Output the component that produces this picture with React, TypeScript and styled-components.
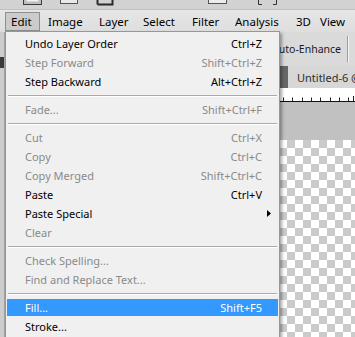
import React from "react";
import styled, { createGlobalStyle, css } from "styled-components";

const Global = createGlobalStyle`
  html, body { margin: 0; padding: 0; }
  body {
    width: 355px;
    height: 337px;
    overflow: hidden;
    background: #c1c1c1;
    font-family: "Noto Sans", "Open Sans", sans-serif;
    -webkit-font-smoothing: antialiased;
  }
`;

const Frame = styled.div`
  position: relative;
  width: 355px;
  height: 337px;
  display: flex;
  flex-direction: column;
  overflow: hidden;
`;

const TopStrip = styled.div`
  height: 10px;
  flex-shrink: 0;
  background: #d2d2d2;
  border-bottom: 1px solid #c2c2c2;
  box-sizing: border-box;
  display: flex;
`;

const MenuBar = styled.div`
  height: 22px;
  flex-shrink: 0;
  box-sizing: border-box;
  background: linear-gradient(#e6e6e6, #dedede);
  display: flex;
  align-items: center;
  padding-left: 5px;
`;

const BarItem = styled.div<{ $w: number; $active?: boolean }>`
  width: ${(p) => p.$w}px;
  height: 19px;
  box-sizing: border-box;
  padding-left: 6px;
  display: flex;
  align-items: center;
  font-size: 11.5px;
  color: #000;
  white-space: nowrap;
  ${(p) =>
    p.$active &&
    css`
      background: #cbcbcb;
      border: 1px solid #8f8f8f;
      padding-left: 5px;
      margin-right: 2px;
    `}
`;

const Workspace = styled.div`
  flex: 1;
  display: flex;
  min-height: 0;
`;

const ToolsEdge = styled.div`
  width: 5px;
  flex-shrink: 0;
  background: #cdcdcd;
  border-right: 1px solid #a4a4a4;
  box-sizing: border-box;
  display: flex;
  flex-direction: column;
`;

const ToolPatch = styled.div`
  margin-top: 25px;
  height: 11px;
  background: #3a3a3a;
`;

const MainArea = styled.div`
  flex: 1;
  display: flex;
  flex-direction: column;
  min-width: 0;
`;

const OptionsBar = styled.div`
  height: 34px;
  flex-shrink: 0;
  background: #dadada;
  display: flex;
  align-items: center;
  justify-content: flex-end;
  padding-right: 6px;
  box-sizing: border-box;
`;

const OptionLabel = styled.span`
  font-size: 10.5px;
  color: #1a1a1a;
  white-space: nowrap;
  margin-right: 6px;
`;

const OptionDivider = styled.div`
  width: 1px;
  height: 26px;
  background: #9c9c9c;
  border-right: 1px solid #f4f4f4;
`;

const TabBar = styled.div`
  height: 22px;
  flex-shrink: 0;
  background: #666666;
  display: flex;
`;

const DocTab = styled.div`
  margin-left: 283px;
  flex: 1;
  background: #d7d7d7;
  padding-left: 9px;
  display: flex;
  align-items: center;
  font-size: 11px;
  color: #2e2e2e;
  white-space: nowrap;
  overflow: hidden;
`;

const Ruler = styled.div`
  height: 14px;
  flex-shrink: 0;
  background: #ffffff;
  border-bottom: 1px solid #111;
  box-sizing: border-box;
  display: flex;
  align-items: flex-end;
`;

const GrayGap = styled.div`
  height: 38px;
  flex-shrink: 0;
  background: #c1c1c1;
`;

const Checker = styled.div`
  flex: 1;
  background-color: #ffffff;
  background-image: conic-gradient(
    #cbcbcb 0 25%,
    #ffffff 0 50%,
    #cbcbcb 0 75%,
    #ffffff 0
  );
  background-size: 16px 16px;
  background-position: 2px 0;
`;

const Dropdown = styled.div`
  position: absolute;
  left: 5px;
  top: 31px;
  width: 275px;
  height: 320px;
  box-sizing: border-box;
  background: #f0f0f0;
  border: 1px solid #979797;
  padding: 2px 0;
  box-shadow: 2px 2px 3px rgba(0, 0, 0, 0.35);
  display: flex;
  flex-direction: column;
`;

const Item = styled.div<{ $disabled?: boolean; $hot?: boolean }>`
  height: 17px;
  margin: 1px 1px;
  padding-left: 18px;
  display: grid;
  grid-template-columns: 1fr auto 16px;
  align-items: center;
  font-size: 11px;
  white-space: nowrap;
  color: ${(p) => (p.$hot ? "#ffffff" : p.$disabled ? "#8a8a8a" : "#000000")};
  background: ${(p) => (p.$hot ? "#3399ff" : "transparent")};
`;

const Shortcut = styled.span`
  text-align: right;
`;

const ArrowCell = styled.span`
  display: flex;
  align-items: center;
  padding-left: 5px;
`;

const Separator = styled.div`
  height: 9px;
  display: flex;
  align-items: center;
  padding: 0 2px;
  &::after {
    content: "";
    flex: 1;
    height: 0;
    border-top: 1px solid #a9a9a9;
    border-bottom: 1px solid #ffffff;
  }
`;

type Entry =
  | { sep: true }
  | { label: string; key?: string; disabled?: boolean; hot?: boolean; sub?: boolean };

const entries: Entry[] = [
  { label: "Undo Layer Order", key: "Ctrl+Z" },
  { label: "Step Forward", key: "Shift+Ctrl+Z", disabled: true },
  { label: "Step Backward", key: "Alt+Ctrl+Z" },
  { sep: true },
  { label: "Fade...", key: "Shift+Ctrl+F", disabled: true },
  { sep: true },
  { label: "Cut", key: "Ctrl+X", disabled: true },
  { label: "Copy", key: "Ctrl+C", disabled: true },
  { label: "Copy Merged", key: "Shift+Ctrl+C", disabled: true },
  { label: "Paste", key: "Ctrl+V" },
  { label: "Paste Special", sub: true },
  { label: "Clear", disabled: true },
  { sep: true },
  { label: "Check Spelling...", disabled: true },
  { label: "Find and Replace Text...", disabled: true },
  { sep: true },
  { label: "Fill...", key: "Shift+F5", hot: true },
  { label: "Stroke..." },
];

const barItems: { label: string; w: number; active?: boolean }[] = [
  { label: "Edit", w: 35, active: true },
  { label: "Image", w: 51 },
  { label: "Layer", w: 44 },
  { label: "Select", w: 49 },
  { label: "Filter", w: 43 },
  { label: "Analysis", w: 61 },
  { label: "3D", w: 24 },
  { label: "View", w: 40 },
];

const ToolbarIcons = () => (
  <svg width="355" height="9" viewBox="0 0 355 9">
    <rect x="23.5" y="-3.5" width="18" height="8" fill="#bdbdbd" stroke="#3c3c3c" />
    <rect x="26.5" y="-3.5" width="12" height="5" fill="#f2f2f2" stroke="none" />
    <rect x="60.5" y="-3.5" width="17" height="7" fill="#e9e9e9" stroke="#555" />
    <path d="M97.5 4.5 V-1 M97.5 4.5 H112.5 V-1" fill="none" stroke="#2a2a2a" strokeWidth="2" />
    <rect x="208.5" y="-3.5" width="18" height="7" fill="#ececec" stroke="#555" />
    <path d="M258.5 -1 V4.5 H262 M276.5 -1 V4.5 H273" fill="none" stroke="#333" />
  </svg>
);

const RulerTicks = () => {
  const ticks = [];
  for (let x = 283; x <= 350; x += 9.3) ticks.push(Math.round(x - 5) + 0.5);
  return (
    <svg width="350" height="5" viewBox="0 0 350 5">
      {ticks.map((x, i) => (
        <line key={i} x1={x} y1={1.5} x2={x} y2={5} stroke="#222" />
      ))}
      <line x1={348.5} y1={-10} x2={348.5} y2={5} stroke="#222" />
    </svg>
  );
};

const Arrow = () => (
  <svg width="4" height="7" viewBox="0 0 4 7">
    <path d="M0 0 L4 3.5 L0 7 Z" fill="#000" />
  </svg>
);

export default function App() {
  return (
    <Frame>
      <Global />
      <TopStrip>
        <ToolbarIcons />
      </TopStrip>
      <MenuBar>
        {barItems.map((b) => (
          <BarItem key={b.label} $w={b.w} $active={b.active}>
            {b.label}
          </BarItem>
        ))}
      </MenuBar>
      <Workspace>
        <ToolsEdge>
          <ToolPatch />
        </ToolsEdge>
        <MainArea>
          <OptionsBar>
            <OptionLabel>Auto-Enhance</OptionLabel>
            <OptionDivider />
          </OptionsBar>
          <TabBar>
            <DocTab>Untitled-6 @ 100% (Layer 1, RGB/8)</DocTab>
          </TabBar>
          <Ruler>
            <RulerTicks />
          </Ruler>
          <GrayGap />
          <Checker />
        </MainArea>
      </Workspace>
      <Dropdown>
        {entries.map((e, i) =>
          "sep" in e ? (
            <Separator key={i} />
          ) : (
            <Item key={i} $disabled={e.disabled} $hot={e.hot}>
              <span>{e.label}</span>
              <Shortcut>{e.key ?? ""}</Shortcut>
              <ArrowCell>{e.sub ? <Arrow /> : null}</ArrowCell>
            </Item>
          )
        )}
      </Dropdown>
    </Frame>
  );
}
